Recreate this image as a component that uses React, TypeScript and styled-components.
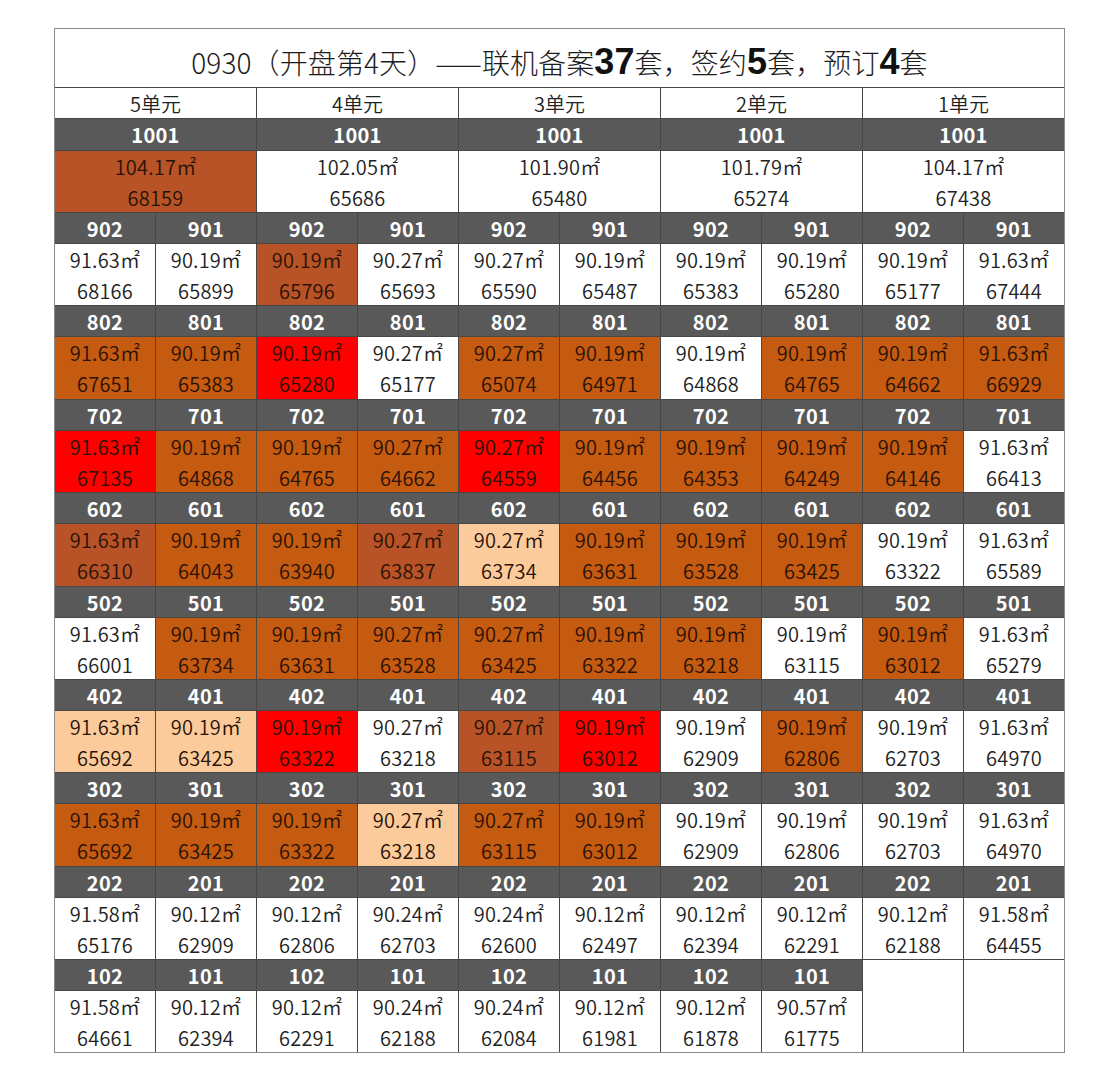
import React from "react";
import styled, { createGlobalStyle } from "styled-components";

const GlobalStyle = createGlobalStyle`
  html, body {
    margin: 0;
    padding: 0;
    background: #ffffff;
  }
  body {
    font-family: "Noto Sans CJK SC", "Noto Sans", sans-serif;
    color: #222;
  }
`;

const Page = styled.div`
  padding: 28px 0 0 54px;
  width: 1119px;
  height: 1080px;
  box-sizing: border-box;
`;

const Sheet = styled.div`
  display: grid;
  grid-template-columns: repeat(10, 100px);
  grid-template-rows:
    58px 30px 31px 61px
    30px 61px 30px 62px 30px 61px 30px 62px 30px 61px
    30px 61px 30px 62px 30px 61px 30px 61px;
  gap: 1px;
  width: max-content;
  background: #474747;
  border: 1px solid #8a8a8a;
`;

const Title = styled.div`
  grid-column: 1 / -1;
  background: #fff;
  display: flex;
  align-items: center;
  justify-content: center;
  padding-top: 8px;
  box-sizing: border-box;
  font-size: 28px;
  font-weight: 300;
  letter-spacing: 0.1px;
  color: #1c1c1c;
  white-space: nowrap;
`;

const BigNum = styled.span`
  font-family: "Liberation Sans", Arial, sans-serif;
  font-weight: 700;
  font-size: 36px;
  color: #111;
  line-height: 1;
`;

const UnitLabel = styled.div`
  grid-column: span 2;
  background: #fff;
  display: flex;
  align-items: center;
  justify-content: center;
  font-size: 20px;
  font-weight: 350;
  color: #222;
`;

const RoomHeader = styled.div<{ $span?: number }>`
  grid-column: span ${(p) => p.$span ?? 1};
  background: #595959;
  color: #fff;
  font-weight: 700;
  font-size: 20px;
  display: flex;
  align-items: center;
  justify-content: center;
  letter-spacing: 0.3px;
`;

const DataCell = styled.div<{ $bg: string; $span?: number }>`
  grid-column: span ${(p) => p.$span ?? 1};
  background: ${(p) => p.$bg};
  display: flex;
  flex-direction: column;
  align-items: center;
  justify-content: center;
  font-size: 20px;
  font-weight: 350;
  line-height: 31px;
  letter-spacing: 0.2px;
  color: ${(p) => (p.$bg === "#ffffff" ? "#222" : "#2a1206")};
`;

const EmptyCell = styled.div`
  grid-row: span 2;
  background: #fff;
`;

const COLORS: Record<string, string> = {
  W: "#ffffff",
  O: "#c55a11",
  D: "#b75326",
  R: "#ff0000",
  P: "#fccb9c",
};

type Unit = { a: string; p: string; c: string };

const parse = (s: string): Unit[] =>
  s
    .trim()
    .split(/\s*,\s*/)
    .map((t) => {
      const [a, p, c] = t.split(/\s+/);
      return { a, p, c };
    });

const units = ["5单元", "4单元", "3单元", "2单元", "1单元"];

const top = parse(
  "104.17 68159 D, 102.05 65686 W, 101.90 65480 W, 101.79 65274 W, 104.17 67438 W"
);

const floors: { n: number; cells: Unit[] }[] = [
  {
    n: 9,
    cells: parse(
      "91.63 68166 W, 90.19 65899 W, 90.19 65796 D, 90.27 65693 W, 90.27 65590 W, 90.19 65487 W, 90.19 65383 W, 90.19 65280 W, 90.19 65177 W, 91.63 67444 W"
    ),
  },
  {
    n: 8,
    cells: parse(
      "91.63 67651 O, 90.19 65383 O, 90.19 65280 R, 90.27 65177 W, 90.27 65074 O, 90.19 64971 O, 90.19 64868 W, 90.19 64765 O, 90.19 64662 O, 91.63 66929 O"
    ),
  },
  {
    n: 7,
    cells: parse(
      "91.63 67135 R, 90.19 64868 O, 90.19 64765 O, 90.27 64662 O, 90.27 64559 R, 90.19 64456 O, 90.19 64353 O, 90.19 64249 O, 90.19 64146 O, 91.63 66413 W"
    ),
  },
  {
    n: 6,
    cells: parse(
      "91.63 66310 D, 90.19 64043 O, 90.19 63940 O, 90.27 63837 D, 90.27 63734 P, 90.19 63631 O, 90.19 63528 O, 90.19 63425 O, 90.19 63322 W, 91.63 65589 W"
    ),
  },
  {
    n: 5,
    cells: parse(
      "91.63 66001 W, 90.19 63734 O, 90.19 63631 O, 90.27 63528 O, 90.27 63425 O, 90.19 63322 O, 90.19 63218 O, 90.19 63115 W, 90.19 63012 O, 91.63 65279 W"
    ),
  },
  {
    n: 4,
    cells: parse(
      "91.63 65692 P, 90.19 63425 P, 90.19 63322 R, 90.27 63218 W, 90.27 63115 D, 90.19 63012 R, 90.19 62909 W, 90.19 62806 O, 90.19 62703 W, 91.63 64970 W"
    ),
  },
  {
    n: 3,
    cells: parse(
      "91.63 65692 O, 90.19 63425 O, 90.19 63322 O, 90.27 63218 P, 90.27 63115 O, 90.19 63012 O, 90.19 62909 W, 90.19 62806 W, 90.19 62703 W, 91.63 64970 W"
    ),
  },
  {
    n: 2,
    cells: parse(
      "91.58 65176 W, 90.12 62909 W, 90.12 62806 W, 90.24 62703 W, 90.24 62600 W, 90.12 62497 W, 90.12 62394 W, 90.12 62291 W, 90.12 62188 W, 91.58 64455 W"
    ),
  },
  {
    n: 1,
    cells: parse(
      "91.58 64661 W, 90.12 62394 W, 90.12 62291 W, 90.24 62188 W, 90.24 62084 W, 90.12 61981 W, 90.12 61878 W, 90.57 61775 W"
    ),
  },
];

const Cell = ({ u, span }: { u: Unit; span?: number }) => (
  <DataCell $bg={COLORS[u.c]} $span={span}>
    <span>{u.a}㎡</span>
    <span>{u.p}</span>
  </DataCell>
);

export default function App() {
  return (
    <>
      <GlobalStyle />
      <Page>
        <Sheet>
          <Title>
            0930（开盘第4天）——联机备案<BigNum>37</BigNum>套，签约
            <BigNum>5</BigNum>套，预订<BigNum>4</BigNum>套
          </Title>
          {units.map((u) => (
            <UnitLabel key={u}>{u}</UnitLabel>
          ))}
          {units.map((u) => (
            <RoomHeader key={`h-${u}`} $span={2}>
              1001
            </RoomHeader>
          ))}
          {top.map((u, i) => (
            <Cell key={`t-${i}`} u={u} span={2} />
          ))}
          {floors.map((f) => (
            <React.Fragment key={f.n}>
              {f.cells.map((_, i) => (
                <RoomHeader key={`fh-${f.n}-${i}`}>
                  {f.n}
                  {i % 2 === 0 ? "02" : "01"}
                </RoomHeader>
              ))}
              {f.cells.length < 10 && (
                <>
                  <EmptyCell />
                  <EmptyCell />
                </>
              )}
              {f.cells.map((u, i) => (
                <Cell key={`fc-${f.n}-${i}`} u={u} />
              ))}
            </React.Fragment>
          ))}
        </Sheet>
      </Page>
    </>
  );
}
